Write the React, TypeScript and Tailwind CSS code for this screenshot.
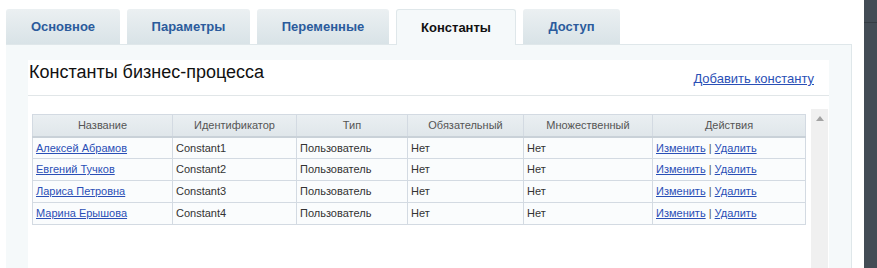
const tabs = [
  { label: "Основное", w: "w-[114px]" },
  { label: "Параметры", w: "w-[123px]" },
  { label: "Переменные", w: "w-[132px]" },
  { label: "Константы", w: "w-[120px]", active: true },
  { label: "Доступ", w: "w-[97px]" },
];

const rows = [
  ["Алексей Абрамов", "Constant1"],
  ["Евгений Тучков", "Constant2"],
  ["Лариса Петровна", "Constant3"],
  ["Марина Ерышова", "Constant4"],
];

const cols = [
  { label: "Название", w: "w-[140px]" },
  { label: "Идентификатор", w: "w-[124px]" },
  { label: "Тип", w: "w-[111px]" },
  { label: "Обязательный", w: "w-[116px]" },
  { label: "Множественный", w: "w-[129px]" },
  { label: "Действия", w: "" },
];

function Link({ children }: { children: React.ReactNode }) {
  return <a href="#" className="text-[#2a4fb6] underline underline-offset-1">{children}</a>;
}

export default function App() {
  return (
    <div className="w-[877px] h-[268px] bg-white flex overflow-hidden font-['Liberation_Sans',Arial,sans-serif]">
      <div className="w-[852px] pl-[6px] pt-[9px] flex flex-col">
        {/* tabs */}
        <div className="flex gap-[7px] h-[35px] relative z-10">
          {tabs.map((t) =>
            t.active ? (
              <div
                key={t.label}
                className={`${t.w} h-[36px] rounded-t-[3px] border border-b-0 border-[#dfe7ea] bg-[#f5f9fa] flex items-center justify-center text-[13px] font-bold text-[#111]`}
              >
                {t.label}
              </div>
            ) : (
              <div
                key={t.label}
                className={`${t.w} h-[35px] rounded-t-[3px] bg-gradient-to-b from-[#ebf0f2] to-[#d9e3e7] flex items-center justify-center text-[13px] font-bold text-[#2b5b9c]`}
              >
                {t.label}
              </div>
            )
          )}
        </div>

        {/* panel */}
        <div className="flex-1 bg-[#f5f9fa] border-t border-r border-[#dfe7ea] pt-[15px] px-[22px]">
          <div className="bg-white h-full">
            <div className="h-[36px] flex items-start justify-between border-b border-[#e1e6e8]">
              <div className="text-[18px] text-[#111] pl-px pt-[1px] leading-[22px]">Константы бизнес-процесса</div>
              <div className="text-[13px] pr-[15px] pt-[9px]">
                <Link>Добавить константу</Link>
              </div>
            </div>

            <div className="flex mt-[13px] pl-[4px]">
              <div className="pt-[5px]">
                <table className="w-[774px] border-collapse text-[11px] text-[#333] table-fixed">
                  <thead>
                    <tr className="h-[22px] bg-gradient-to-b from-[#eaeff2] to-[#dfe6ea]">
                      {cols.map((c) => (
                        <th
                          key={c.label}
                          className={`${c.w} border border-[#d3dae2] border-b-2 border-b-[#c9d1d8] font-normal text-[#555] text-center`}
                        >
                          {c.label}
                        </th>
                      ))}
                    </tr>
                  </thead>
                  <tbody>
                    {rows.map(([name, id]) => (
                      <tr key={id} className="h-[22px] bg-[#fafcfd]">
                        <td className="border border-[#d3dae2] pl-[3px]">
                          <Link>{name}</Link>
                        </td>
                        <td className="border border-[#d3dae2] pl-[3px]">{id}</td>
                        <td className="border border-[#d3dae2] pl-[3px]">Пользователь</td>
                        <td className="border border-[#d3dae2] pl-[3px]">Нет</td>
                        <td className="border border-[#d3dae2] pl-[3px]">Нет</td>
                        <td className="border border-[#d3dae2] pl-[3px] whitespace-nowrap">
                          <Link>Изменить</Link> <span className="text-[#555]">|</span> <Link>Удалить</Link>
                        </td>
                      </tr>
                    ))}
                  </tbody>
                </table>
              </div>
              {/* scrollbar */}
              <div className="ml-[5px] w-[17px] h-[160px] bg-[#f0f0f0] flex justify-center pt-[7px]">
                <svg width="8" height="5" viewBox="0 0 8 5">
                  <path d="M4 0 L8 5 L0 5 Z" fill="#a3a3a3" />
                </svg>
              </div>
            </div>
          </div>
        </div>
      </div>
      <div className="w-[12px]" />
      <div className="flex-1 bg-[#434c55] flex flex-col">
        <div className="h-[23px] border-b border-[#353c43]" />
      </div>
    </div>
  );
}
